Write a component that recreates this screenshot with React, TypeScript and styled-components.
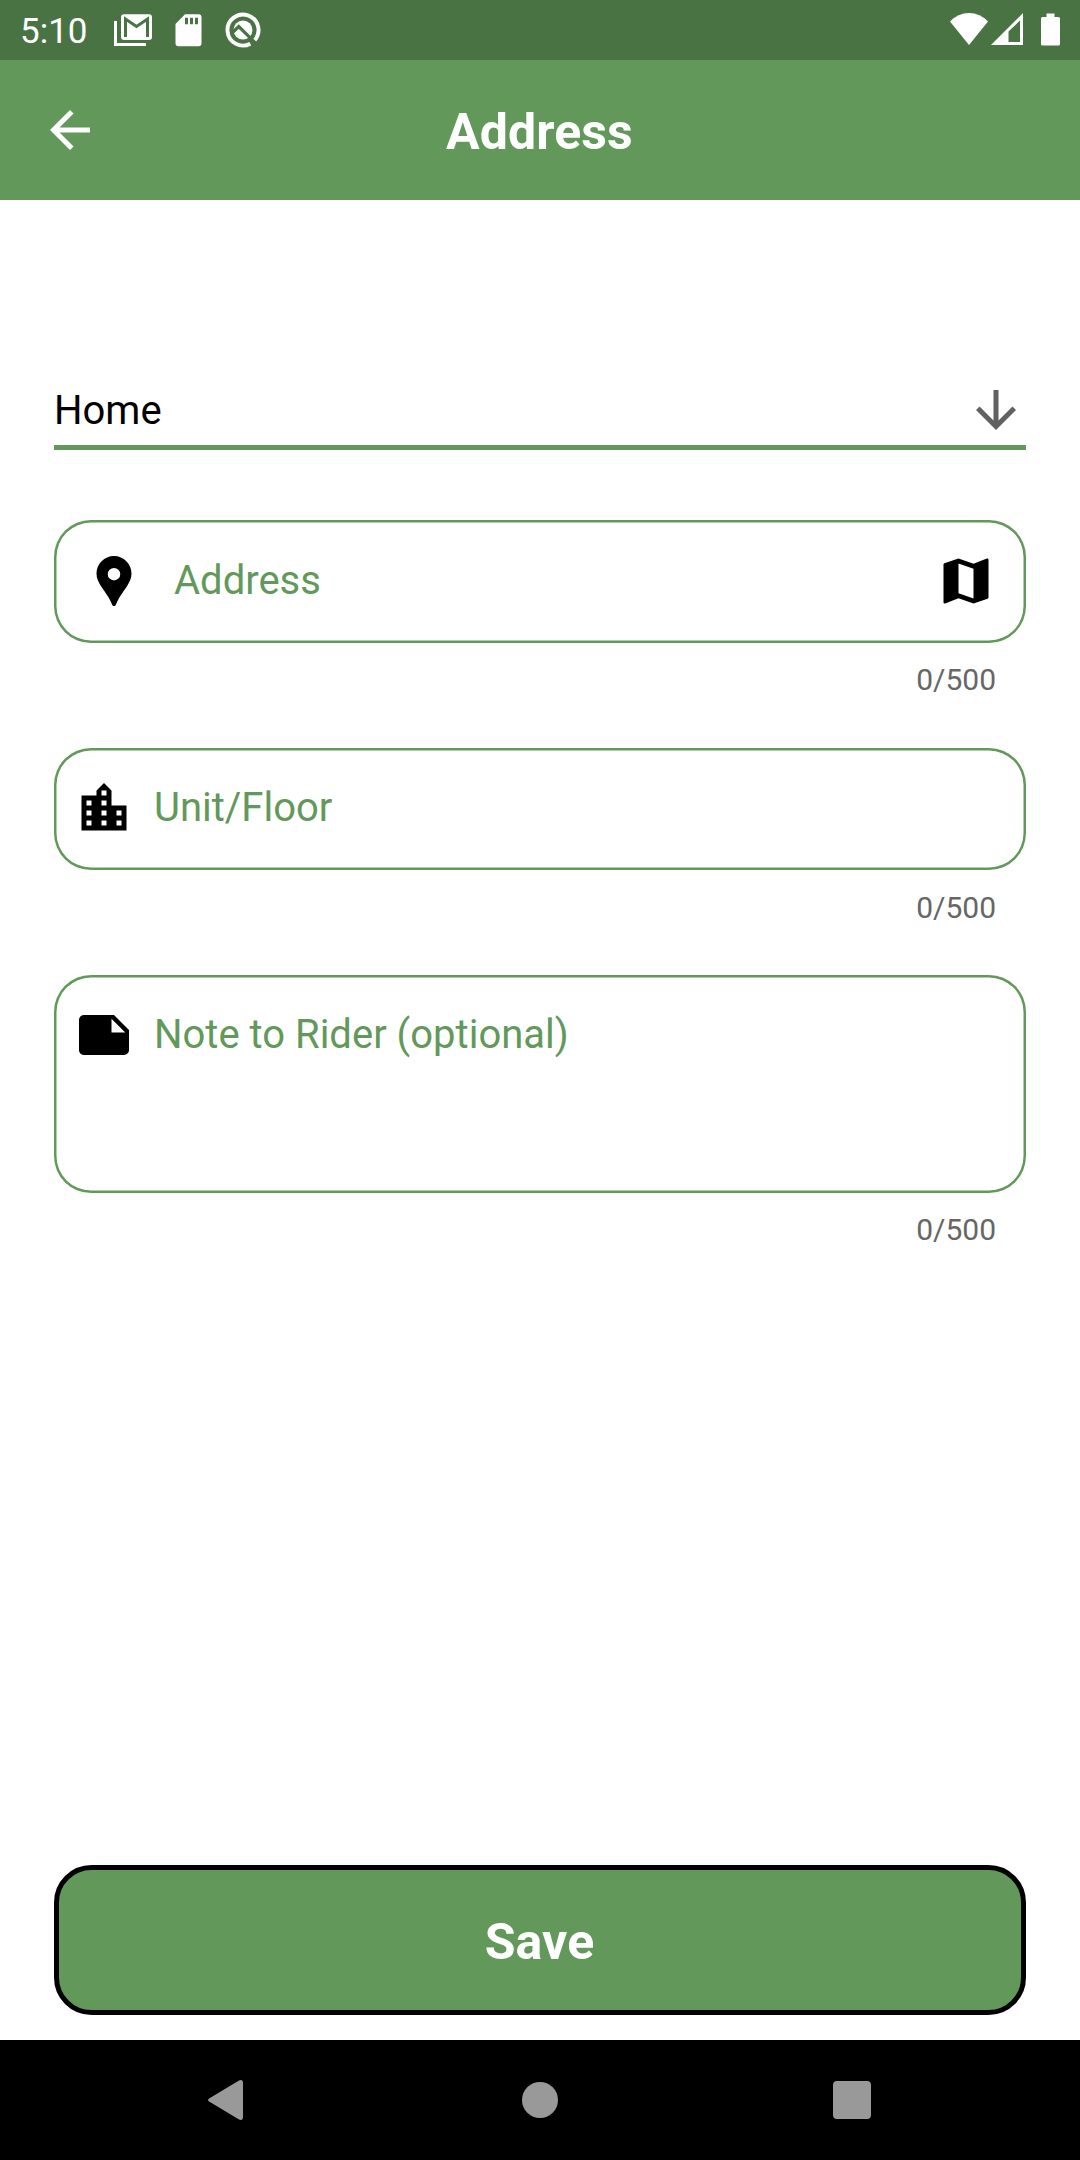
import React from 'react';
import styled, { createGlobalStyle } from 'styled-components';

const green = '#62995b';

const GlobalStyle = createGlobalStyle`
  body {
    margin: 0;
    background: #ffffff;
    font-family: Roboto, 'Noto Sans', sans-serif;
  }
`;

const Screen = styled.div`
  display: flex;
  flex-direction: column;
  width: 1080px;
  height: 2160px;
  background: #ffffff;
  overflow: hidden;
`;

const StatusBar = styled.header`
  display: flex;
  justify-content: space-between;
  height: 60px;
  padding: 0 20px;
  box-sizing: border-box;
  background: #4a7344;
  color: #ffffff;
`;

const StatusGroup = styled.div`
  display: flex;
  align-items: center;
`;

const Clock = styled.span`
  width: 94px;
  padding-top: 3px;
  font-size: 35px;
  line-height: 60px;
`;

const StatusIcon = styled.svg<{ $w: number; $gap?: number }>`
  display: block;
  width: ${(p) => p.$w}px;
  height: 60px;
  margin-right: ${(p) => p.$gap ?? 0}px;
`;

const AppBar = styled.div`
  display: grid;
  grid-template-columns: 60px 1fr 60px;
  align-items: center;
  height: 140px;
  padding: 0 40px;
  box-sizing: border-box;
  background: ${green};
  color: #ffffff;
`;

const Title = styled.h1`
  margin: 0;
  padding: 4px 1px 0 0;
  text-align: center;
  font-size: 50px;
  font-weight: 700;
  line-height: 60px;
  letter-spacing: 0.1px;
`;

const Icon = styled.svg`
  display: block;
  flex: none;
  width: 60px;
  height: 60px;
  fill: currentColor;
`;

const Form = styled.main`
  display: flex;
  flex: 1;
  flex-direction: column;
  padding: 175px 54px 25px;
`;

const Select = styled.div`
  display: flex;
  align-items: center;
  justify-content: space-between;
  height: 75px;
  padding-top: 5px;
  padding-bottom: 5px;
  box-sizing: border-box;
  border-bottom: 5px solid ${green};
  color: #616161;
`;

const SelectValue = styled.span`
  padding-top: 2px;
  color: #000000;
  font-size: 40px;
  line-height: 60px;
`;

const Fields = styled.div`
  display: flex;
  flex-direction: column;
  padding-top: 70px;
`;

const Field = styled.div`
  display: flex;
  flex-direction: column;
  height: 227.5px;

  &:last-child {
    height: 322.5px;
  }
`;

const FieldBox = styled.div<{ $height: number; $inset: number; $top: number }>`
  display: flex;
  align-items: flex-start;
  gap: ${(p) => p.$inset + 10}px;
  height: ${(p) => p.$height}px;
  padding: ${(p) => p.$top}px 30px 0 ${(p) => p.$inset + 10}px;
  box-sizing: border-box;
  border-radius: 37px;
  box-shadow: inset 0 0 0 2.5px ${green};
  color: #000000;
`;

const Hint = styled.span`
  flex: 1;
  color: ${green};
  font-size: 40px;
  line-height: 60px;
`;

const Counter = styled.span`
  padding: 17.75px 30px 0 0;
  text-align: right;
  color: #666666;
  font-size: 30px;
  line-height: 40px;
`;

const SaveButton = styled.button`
  height: 150px;
  margin-top: auto;
  padding: 4px 1px 0 0;
  box-sizing: border-box;
  border: 5px solid #000000;
  border-radius: 37.5px;
  background: ${green};
  color: #ffffff;
  font-family: inherit;
  font-size: 50px;
  font-weight: 700;
  line-height: 60px;
  letter-spacing: 0.1px;
`;

const NavBar = styled.nav`
  display: flex;
  align-items: center;
  justify-content: space-between;
  height: 120px;
  padding: 0 198px 0 198px;
  box-sizing: border-box;
  background: #000000;
  color: #999999;
`;

const paths = {
  back: 'M20 11H7.83l5.59-5.59L12 4l-8 8 8 8 1.41-1.41L7.83 13H20v-2z',
  down: 'M20 12l-1.41-1.41L13 16.17V4h-2v12.17l-5.58-5.59L4 12l8 8 8-8z',
  pin: 'M12 2C8.14 2 5 5.14 5 9c0 1.9.75 3.4 1.8 5.05l1.4 2.05c1.2 1.75 2.15 3.2 2.75 4.65.3.7.5 1.25 1.05 1.25s.75-.55 1.05-1.25c.6-1.45 1.55-2.9 2.75-4.65l1.4-2.05C18.25 12.4 19 10.9 19 9c0-3.86-3.14-7-7-7zm0 9.75a2.5 2.5 0 010-5 2.5 2.5 0 010 5z',
  map: 'M20.5 3l-.16.03L15 5.1 9 3 3.36 4.9c-.21.07-.36.25-.36.48V20.5c0 .28.22.5.5.5l.16-.03L9 18.9l6 2.1 5.64-1.9c.21-.07.36-.25.36-.48V3.5c0-.28-.22-.5-.5-.5zM15 19l-6-2.11V5l6 2.11V19z',
  city: 'M15 11V5l-3-3-3 3v2H3v14h18V11h-6zm-8 8H5v-2h2v2zm0-4H5v-2h2v2zm0-4H5V9h2v2zm6 8h-2v-2h2v2zm0-4h-2v-2h2v2zm0-4h-2V9h2v2zm0-4h-2V5h2v2zm6 12h-2v-2h2v2zm0-4h-2v-2h2v2z',
  note: 'M22 10l-6-6H4c-1.1 0-2 .9-2 2v12.01c0 1.1.9 1.99 2 1.99l16-.01c1.1 0 2-.89 2-1.99v-8zm-7-4.5l5.5 5.5H15V5.5z',
};

function Glyph({ name }: { name: keyof typeof paths }) {
  return (
    <Icon viewBox="0 0 24 24">
      <path d={paths[name]} />
    </Icon>
  );
}

interface FormFieldProps {
  icon: keyof typeof paths;
  hint: string;
  height?: number;
  inset?: number;
  top?: number;
  action?: keyof typeof paths;
}

function FormField({ icon, hint, height = 122.5, inset = 10, top = 31, action }: FormFieldProps) {
  return (
    <Field>
      <FieldBox $height={height} $inset={inset} $top={top}>
        <Glyph name={icon} />
        <Hint>{hint}</Hint>
        {action && <Glyph name={action} />}
      </FieldBox>
      <Counter>0/500</Counter>
    </Field>
  );
}

export default function App() {
  return (
    <Screen>
      <GlobalStyle />
      <StatusBar>
        <StatusGroup>
          <Clock>5:10</Clock>
          <StatusIcon $w={38} $gap={23} viewBox="0 0 38 60">
            <path d="M1.5 21V44.5H32" fill="none" stroke="#fff" strokeWidth="3" />
            <rect x="7" y="14.3" width="31" height="25.7" rx="3" fill="#fff" />
            <path d="M11.5 37V19L22.5 26.5L33.5 19V37" fill="none" stroke="#4a7344" strokeWidth="3" />
          </StatusIcon>
          <StatusIcon $w={27} $gap={23} viewBox="0 0 27 60">
            <path
              fill="#fff"
              fillRule="evenodd"
              d="M10 14.300H23.500a3 3 0 013 3V43.300a3 3 0 01-3 3H3.500a3 3 0 01-3-3V24zM10 17.700v6.500h3v-6.500zM15 17.700v6.500h3v-6.500zM20 17.700v6.500h3v-6.500z"
            />
          </StatusIcon>
          <StatusIcon $w={36} viewBox="0 0 36 60">
            <path d="M25.300 43.700A15.500 15.500 0 1 1 29.600 40.300" fill="none" stroke="#fff" strokeWidth="3.900" />
            <circle cx="18" cy="30" r="9.500" fill="#fff" />
            <path d="M8 32L13.800 26.500L30 42.700" fill="none" stroke="#4a7344" strokeWidth="3.200" />
          </StatusIcon>
        </StatusGroup>
        <StatusGroup>
          <StatusIcon $w={38} $gap={3} viewBox="0 0 38 60">
            <path fill="#fff" d="M0 21.500Q8 13 19 13T38 21.500L19 45z" />
          </StatusIcon>
          <StatusIcon $w={32} $gap={18} viewBox="0 0 32 60">
            <path fill="#fff" fillRule="evenodd" d="M0 45L32 13V45zM17.500 31.500V42H29V20.500z" />
          </StatusIcon>
          <StatusIcon $w={19} viewBox="0 0 19 60">
            <path
              fill="#fff"
              d="M5.500 13.500h8V17H17.500a1.500 1.500 0 011.500 1.500V44a1.500 1.500 0 01-1.500 1.500h-16A1.500 1.500 0 010 44V18.500A1.500 1.500 0 011.500 17h4z"
            />
          </StatusIcon>
        </StatusGroup>
      </StatusBar>
      <AppBar>
        <Glyph name="back" />
        <Title>Address</Title>
      </AppBar>
      <Form>
        <Select>
          <SelectValue>Home</SelectValue>
          <Glyph name="down" />
        </Select>
        <Fields>
          <FormField icon="pin" hint="Address" inset={20} action="map" />
          <FormField icon="city" hint="Unit/Floor" top={30.5} />
          <FormField icon="note" hint="Note to Rider (optional)" height={217.5} top={30} />
        </Fields>
        <SaveButton>Save</SaveButton>
      </Form>
      <NavBar>
        <Icon viewBox="0 0 60 60">
          <path d="M11.500 28.200L41 10.400Q45 9 45 13V47Q45 51 41 49.600L11.500 31.800Q8.500 30 11.500 28.200z" />
        </Icon>
        <Icon viewBox="0 0 60 60">
          <circle cx="30" cy="30" r="18" />
        </Icon>
        <Icon viewBox="0 0 60 60">
          <rect x="11" y="11" width="38" height="38" rx="4" />
        </Icon>
      </NavBar>
    </Screen>
  );
}
